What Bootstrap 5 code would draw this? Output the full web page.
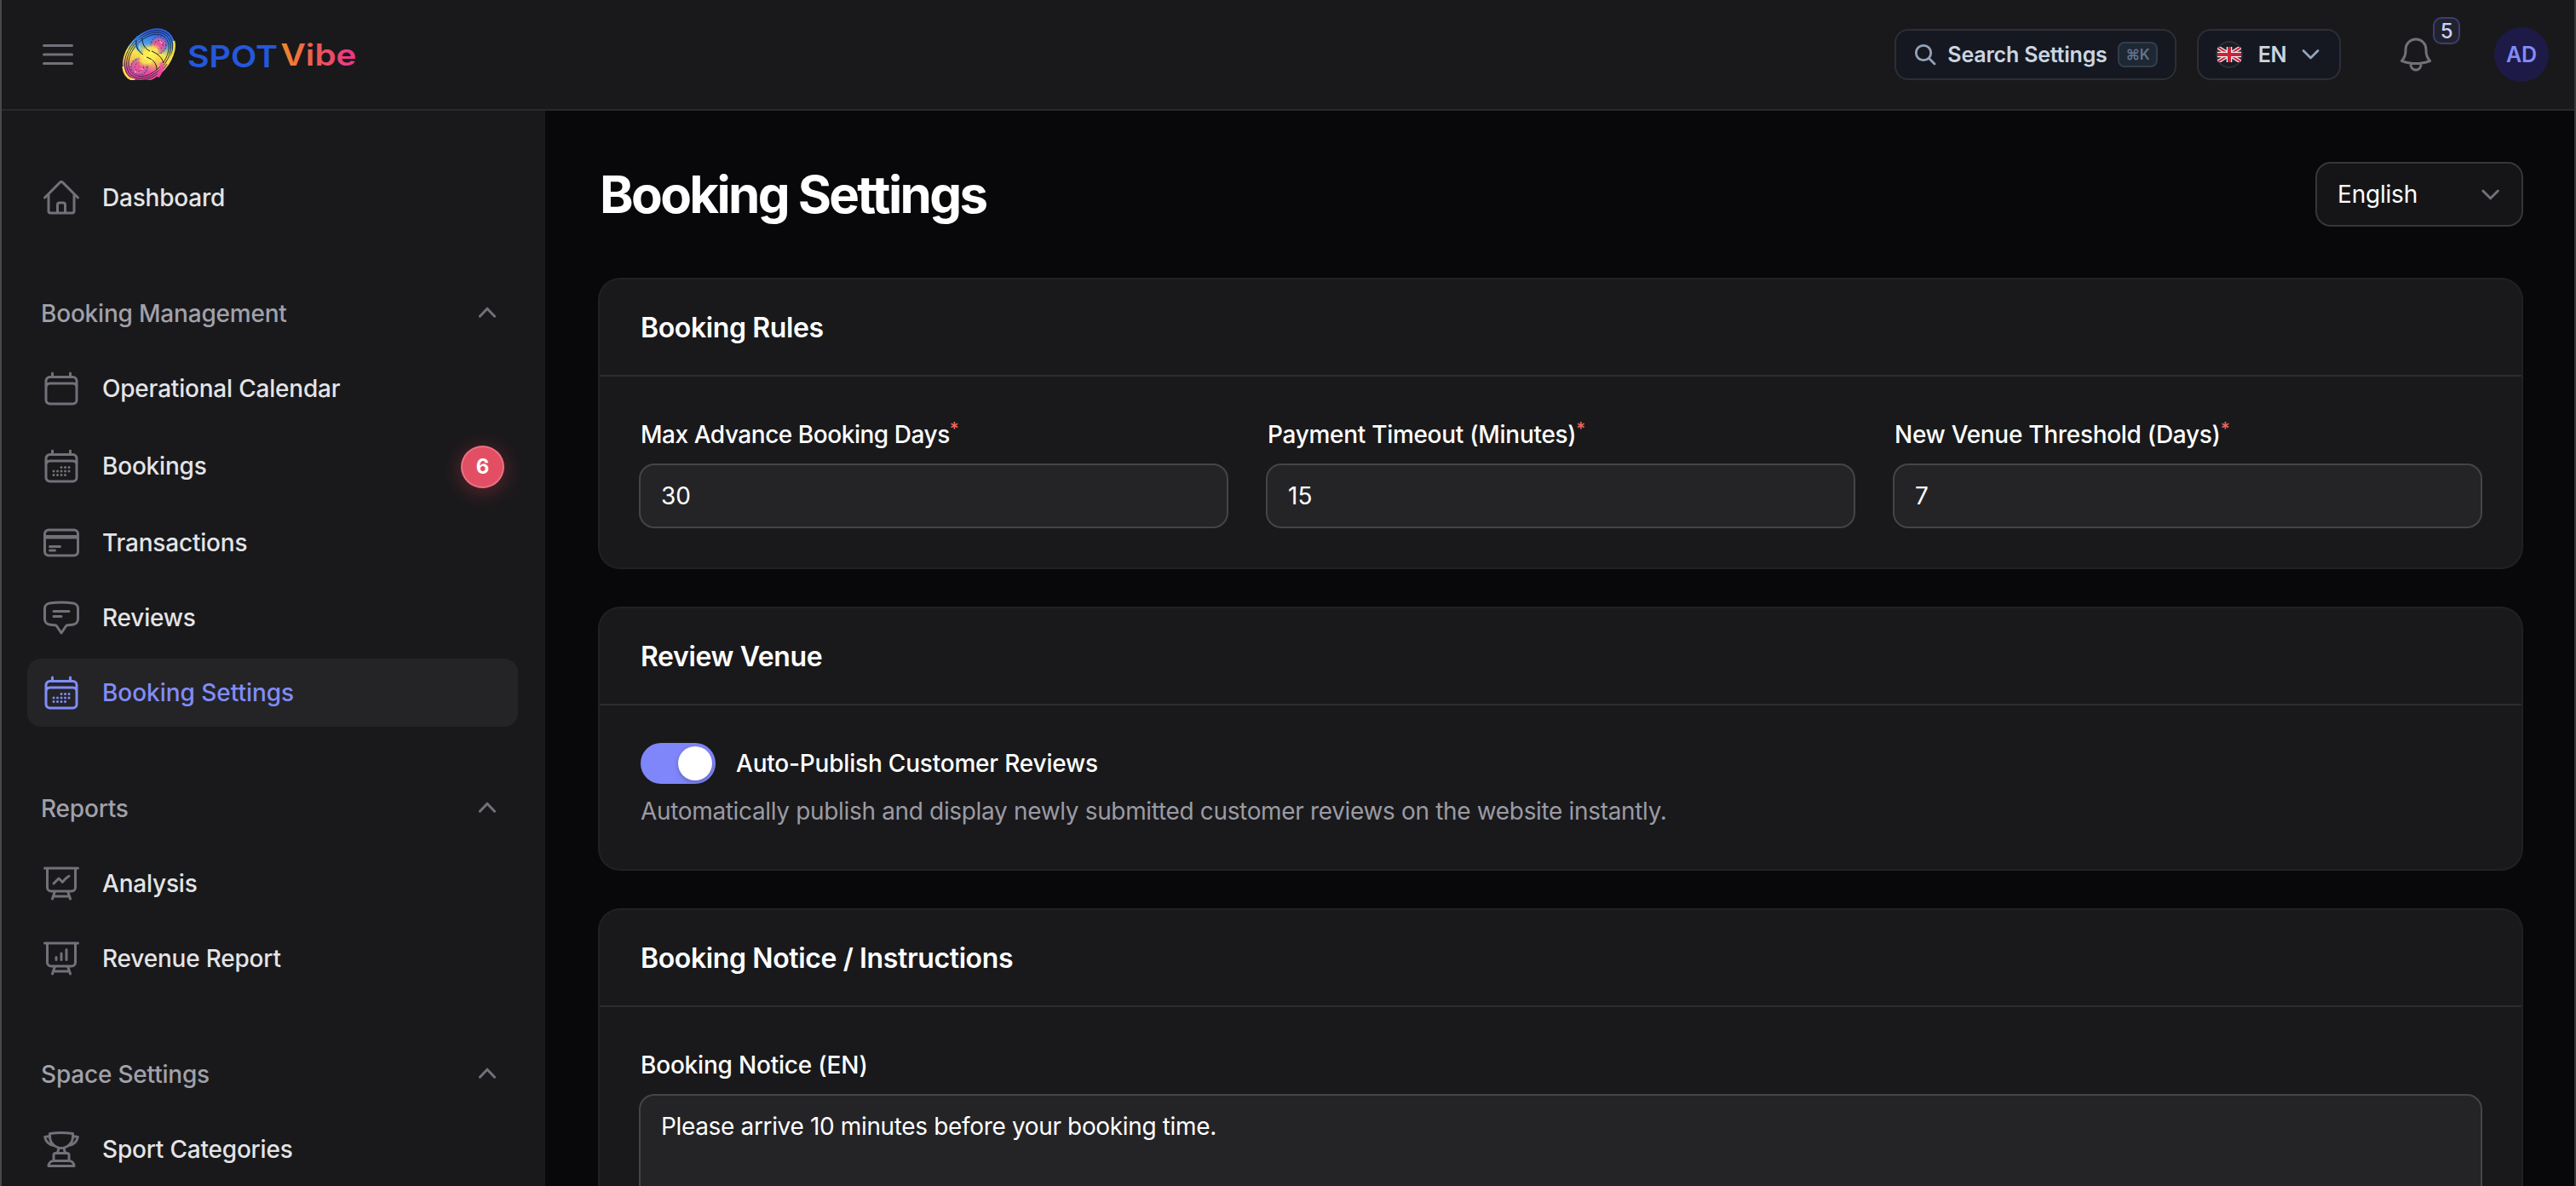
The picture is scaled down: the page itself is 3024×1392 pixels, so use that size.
<!DOCTYPE html>
<html lang="en" data-bs-theme="dark">
<head>
    <meta charset="UTF-8">
    <meta name="viewport" content="width=device-width, initial-scale=1">
    <title>Booking Settings</title>
    <link href="https://cdn.jsdelivr.net/npm/bootstrap@5.3.0/dist/css/bootstrap.min.css" rel="stylesheet">
    <style>
        body {
            font-family: Inter, "Liberation Sans", sans-serif;
            font-size: 28px;
            line-height: 48px;
            font-weight: 500;
            letter-spacing: -.2px;
            color: #fff;
            background: #08080a;
            height: 100vh;
            overflow: hidden;
            border-left: 2px solid #48484a;
            border-right: 2px solid #38383a;
        }
        svg { display: block; flex-shrink: 0; }
        .ico {
            width: 48px;
            height: 48px;
            fill: none;
            stroke: #71717a;
            stroke-width: 1.5;
            stroke-linecap: round;
            stroke-linejoin: round;
        }

        /* top bar */
        .topbar {
            height: 130px;
            background: #19191b;
            border-bottom: 2px solid #29292b;
            padding: 0 30px 0 42px;
        }
        .brand-logo { margin-left: 50px; letter-spacing: 0; }
        .pill-btn {
            height: 60px;
            background: #151820;
            border: 2px solid #2d2e36;
            border-radius: 16px;
            color: #cbd5e1;
            font-size: 25px;
            font-weight: 600;
            letter-spacing: -.2px;
            line-height: 1;
        }
        .search-btn { width: 331px; padding: 0 20px 0 20px; margin-right: 24px; }
        .lang-btn { width: 169px; padding: 0 22px 0 20px; margin-right: 64px; }
        .key-hint {
            width: 47px;
            height: 30px;
            border: 2px solid #333d4b;
            border-radius: 8px;
            background: #1e2734;
            color: #64748b;
            font-family: Inter, "DejaVu Sans", sans-serif;
            font-size: 17px;
            line-height: 1;
        }
        .bell-count {
            position: absolute;
            left: 44px;
            top: -20px;
            width: 32px;
            height: 32px;
            border: 2px solid #3e3c76;
            border-radius: 10px;
            background: #22222d;
            color: #c7d2fe;
            font-size: 24px;
            line-height: 30px;
            text-align: center;
        }
        .avatar {
            width: 64px;
            height: 64px;
            margin-left: 68px;
            border-radius: 50%;
            background: #1e1a47;
            color: #818cf8;
            font-size: 25px;
            font-weight: 600;
        }

        /* sidebar */
        .shell { height: calc(100vh - 130px); overflow: hidden; }
        .sidebar {
            width: 638px;
            flex-shrink: 0;
            background: #19191b;
            padding: 62px 32px 0 30px;
        }
        .side-group { margin-bottom: 56px; }
        .side-group:last-child { margin-bottom: 0; }
        .side-item, .side-head {
            padding: 16px;
            border-radius: 16px;
            color: #e4e4e7;
            text-decoration: none;
        }
        .side-item { gap: 24px; }
        .side-head { color: #a1a1aa; }
        .side-item.current { background: #242427; color: #818cf8; letter-spacing: -.04px; }
        .side-item.current .ico { stroke: #818cf8; }
        .caret { width: 40px; height: 40px; fill: none; stroke: #71717a; stroke-width: 1.5; stroke-linecap: round; stroke-linejoin: round; }
        .count-dot {
            width: 51px;
            height: 50px;
            margin: 3px 0 0;
            border: 2px solid #ec7182;
            border-radius: 50%;
            background: #e24e63;
            box-shadow: 0 4px 24px rgba(226, 60, 85, .38);
            color: #fff;
            font-size: 24px;
            font-weight: 700;
            line-height: 46px;
            text-align: center;
        }

        /* content */
        .content { padding: 62px 62px 0 64px; min-width: 0; overflow: hidden; }
        .page-title { font-size: 60px; line-height: 71px; padding-top: 1px; font-weight: 700; letter-spacing: -2.65px; }
        .ring-box {
            border-radius: 16px;
            background: #242427;
            box-shadow: 0 0 0 2px #454547;
            border: 0;
            color: #fff;
            font-weight: 400;
        }
        .locale-select { width: 240px; height: 72px; background: #151517; box-shadow: 0 0 0 2px #363638; padding: 0 16px 0 24px; }
        .panel {
            border: 0;
            border-radius: 24px;
            background: #19191b;
            box-shadow: 0 0 0 2px #212123;
            margin-bottom: 48px;
        }
        .panel-head { padding: 33px 48px 31px; font-size: 32px; line-height: 48px; font-weight: 600; letter-spacing: -.38px; margin: 0; }
        .panel-body { padding: 48px; border-top: 2px solid #2d2d30; }
        .fields { display: grid; grid-template-columns: repeat(3, 1fr); gap: 48px; }
        .field-label { display: block; line-height: 40px; height: 40px; margin-bottom: 16px; }
        .fields .field-label { letter-spacing: -.3px; }
        .fields > :first-child .field-label { letter-spacing: -.46px; }
        .field-label sup { color: #f0655f; font-size: 21px; line-height: 0; top: -.42em; }
        input.ring-box { display: block; width: 100%; height: 72px; padding: 12px 24px; }
        textarea.ring-box { display: block; width: 100%; height: 300px; padding: 12px 24px; resize: none; letter-spacing: -.35px; }
        .toggle { width: 88px; height: 48px; padding: 4px; border-radius: 24px; background: #7f86fa; }
        .toggle span { width: 40px; height: 40px; border-radius: 50%; background: #fff; box-shadow: 0 2px 5px rgba(0, 0, 0, .25); }
        .toggle-row { height: 40px; gap: 24px; margin-bottom: 16px; }
        .hint { color: #9b9ba4; line-height: 40px; font-weight: 400; letter-spacing: -.34px; }
    </style>
</head>
<body>

<svg width="0" height="0" class="position-absolute">
    <defs>
        <symbol id="i-calendar" viewBox="0 0 24 24">
            <path d="M6.75 3v2.25M17.25 3v2.25M3 18.75V7.5a2.25 2.25 0 0 1 2.25-2.25h13.5A2.25 2.25 0 0 1 21 7.5v11.25m-18 0A2.25 2.25 0 0 0 5.25 21h13.5A2.25 2.25 0 0 0 21 18.75m-18 0v-7.5A2.25 2.25 0 0 1 5.25 9h13.5A2.25 2.25 0 0 1 21 11.25v7.5"/>
        </symbol>
        <symbol id="i-calendar-days" viewBox="0 0 24 24">
            <path d="M6.75 3v2.25M17.25 3v2.25M3 18.75V7.5a2.25 2.25 0 0 1 2.25-2.25h13.5A2.25 2.25 0 0 1 21 7.5v11.25m-18 0A2.25 2.25 0 0 0 5.25 21h13.5A2.25 2.25 0 0 0 21 18.75m-18 0v-7.5A2.25 2.25 0 0 1 5.25 9h13.5A2.25 2.25 0 0 1 21 11.25v7.5m-9-6h.008v.008H12v-.008ZM12 15h.008v.008H12V15Zm0 2.250h.008v.008H12v-.008ZM9.750 15h.008v.008H9.750V15Zm0 2.250h.008v.008H9.750v-.008ZM7.500 15h.008v.008H7.500V15Zm0 2.250h.008v.008H7.500v-.008Zm6.750-4.500h.008v.008h-.008v-.008Zm0 2.250h.008v.008h-.008V15Zm0 2.250h.008v.008h-.008v-.008Zm2.250-4.500h.008v.008H16.500v-.008Zm0 2.250h.008v.008H16.500V15Z"/>
        </symbol>
        <symbol id="i-up" viewBox="0 0 20 20"><path d="m5.700 11.600 4.300-4.500 4.300 4.500"/></symbol>
        <symbol id="i-board" viewBox="0 0 24 24">
            <path d="M3.750 3v11.250A2.250 2.250 0 0 0 6 16.500h12a2.250 2.250 0 0 0 2.250-2.250V3M2.250 3h19.500M8.250 16.500l-1 3m8.500-3 1 3m0 0 .5 1.500m-.5-1.500h-9.500m0 0-.5 1.500"/>
        </symbol>
        <linearGradient id="vibe" x1="0" y1="0" x2="1" y2="0">
            <stop offset="0" stop-color="#f08a2c"/>
            <stop offset=".45" stop-color="#ee5a50"/>
            <stop offset="1" stop-color="#ec3294"/>
        </linearGradient>
        <linearGradient id="ball" gradientUnits="userSpaceOnUse" x1="158" y1="42" x2="190" y2="90">
            <stop offset="0" stop-color="#2a5fe8"/>
            <stop offset=".25" stop-color="#4a9fe6"/>
            <stop offset=".45" stop-color="#f7e64a"/>
            <stop offset=".62" stop-color="#f6c552"/>
            <stop offset=".82" stop-color="#ee4fa0"/>
            <stop offset="1" stop-color="#ea3c9e"/>
        </linearGradient>
        <radialGradient id="lobe">
            <stop offset="0" stop-color="#ee4f9c"/>
            <stop offset=".6" stop-color="#e85a98" stop-opacity=".9"/>
            <stop offset="1" stop-color="#7a5ac8" stop-opacity=".5"/>
        </radialGradient>
        <radialGradient id="core">
            <stop offset="0" stop-color="#fdf253"/>
            <stop offset=".65" stop-color="#fbe84e" stop-opacity=".9"/>
            <stop offset="1" stop-color="#f7c84e" stop-opacity="0"/>
        </radialGradient>
    </defs>
</svg>

<header class="topbar d-flex align-items-center">
    <svg class="ico" viewBox="0 0 24 24"><path d="M3.750 6.750h16.500M3.750 12h16.500m-16.500 5.250h16.500"/></svg>

    <svg class="brand-logo" width="290" height="64" viewBox="142 32 290 64">
        <svg x="142" y="32" width="66" height="62" viewBox="142 32 66 62">
            <ellipse cx="174.500" cy="65" rx="25.500" ry="36" fill="url(#ball)" transform="rotate(42 174.500 65)"/>
            <g fill="none" transform="rotate(42 174.500 65)">
                <ellipse cx="174.500" cy="65" rx="23.200" ry="33.500" stroke="#1d1c28" stroke-width=".8"/>
                <ellipse cx="174.500" cy="65" rx="21" ry="31" stroke="#1d1c28" stroke-width=".8"/>
                <ellipse cx="174.500" cy="65" rx="18.800" ry="28.500" stroke="#1d1c28" stroke-width=".8"/>
            </g>
            <!-- left and right rim highlights -->
            <path d="M144.500 78c1 9 6 15 14 16M204 48c2 8-1 18-8 27" fill="none" stroke="#f3e04e" stroke-width="2.500"/>
            <ellipse cx="186" cy="53" rx="10" ry="11" fill="url(#lobe)" transform="rotate(42 186 53)"/>
            <ellipse cx="163.500" cy="78.500" rx="10.500" ry="11.500" fill="url(#lobe)" transform="rotate(42 163.500 78.500)"/>
            <g fill="none" stroke="#2a2333" stroke-width=".8" stroke-dasharray="1.600 2">
                <ellipse cx="186" cy="53" rx="9" ry="10"/>
                <ellipse cx="186.500" cy="52.500" rx="5" ry="5"/>
                <ellipse cx="163.500" cy="78.500" rx="9.500" ry="9.500"/>
                <ellipse cx="163.500" cy="78.500" rx="5" ry="5"/>
            </g>
            <ellipse cx="175" cy="65" rx="17" ry="11.500" fill="url(#core)" transform="rotate(-45 175 65)"/>
            <path d="M162 43c-3 9-1 14 5 19M189 73c2 6 1 11-4 17" fill="none" stroke="url(#ball)" stroke-width="4"/>
            <path d="M160 47c-1 8 2 13 8 17M178 60c7 3 12 7 14 14M167 45c0 7 3 12 9 15M172 67c8 3 12 7 12 15" fill="none" stroke="#1d1b22" stroke-width="1"/>
            <path d="M163 54l2 5M169 68h3M176 73l3-4M182 57l3 2M165 80l3 2M188 48l2 3M175 62l4 1M158 84l2 1" stroke="#fff" stroke-width=".9" stroke-opacity=".75"/>
        </svg>
        <text x="220" y="78.500" font-family="Inter" font-size="36" font-weight="600" fill="#2458dc" textLength="106" lengthAdjust="spacingAndGlyphs">SPOT</text>
        <text x="329.500" y="76.500" font-family="Inter" font-size="35" font-weight="600" fill="url(#vibe)" textLength="89" lengthAdjust="spacingAndGlyphs">Vibe</text>
    </svg>

    <div class="d-flex align-items-center ms-auto">
        <button type="button" class="pill-btn search-btn d-flex align-items-center">
            <svg width="28" height="28" viewBox="0 0 28 28" fill="none" stroke="#94a3b8" stroke-width="2.800" stroke-linecap="round"><circle cx="12" cy="12" r="8.700"/><path d="m18.500 18.500 6.500 6.500"/></svg>
            <span class="ms-auto me-auto">Search Settings</span>
            <kbd class="key-hint d-flex align-items-center justify-content-center p-0">⌘K</kbd>
        </button>
        <button type="button" class="pill-btn lang-btn d-flex align-items-center justify-content-between">
            <svg width="32" height="32" viewBox="0 0 32 32">
                <circle cx="16" cy="16" r="15" fill="#1a1c22" stroke="#2f3036" stroke-width="2"/>
                <svg x="2" y="7" width="28" height="18" viewBox="0 0 28 18">
                    <rect width="28" height="18" fill="#1e2233"/>
                    <path d="M0 0l28 18M28 0L0 18" stroke="#f1eef0" stroke-width="4.500"/>
                    <path d="M0 0l28 18M28 0L0 18" stroke="#c9243a" stroke-width="2"/>
                    <path d="M14 0v18M0 9h28" stroke="#f1eef0" stroke-width="6.500"/>
                    <path d="M14 0v18M0 9h28" stroke="#c9243a" stroke-width="4"/>
                </svg>
            </svg>
            <span>EN</span>
            <svg width="22" height="14" viewBox="0 0 22 14" fill="none" stroke="#94a3b8" stroke-width="2.800" stroke-linecap="round" stroke-linejoin="round"><path d="m2 2.500 8.500 8.500L19 2.500"/></svg>
        </button>
        <div class="position-relative">
            <svg class="ico" viewBox="0 0 24 24"><path d="M14.857 17.082a23.848 23.848 0 0 0 5.454-1.310A8.967 8.967 0 0 1 18 9.750V9A6 6 0 0 0 6 9v.750a8.967 8.967 0 0 1-2.312 6.022c1.733.640 3.560 1.085 5.455 1.310m5.714 0a24.255 24.255 0 0 1-5.714 0m5.714 0a3 3 0 1 1-5.714 0"/></svg>
            <span class="bell-count">5</span>
        </div>
        <div class="avatar d-flex align-items-center justify-content-center">AD</div>
    </div>
</header>

<div class="shell d-flex">
    <nav class="sidebar">
        <div class="side-group">
            <a href="#" class="side-item d-flex align-items-center">
                <svg class="ico" viewBox="0 0 24 24"><path d="m2.250 12 8.954-8.955a1.126 1.126 0 0 1 1.591 0L21.750 12M4.500 9.750v10.125c0 .621.504 1.125 1.125 1.125H9.750v-4.875c0-.621.504-1.125 1.125-1.125h2.250c.621 0 1.125.504 1.125 1.125V21h4.125c.621 0 1.125-.504 1.125-1.125V9.750M8.250 21h8.250"/></svg>
                <span>Dashboard</span>
            </a>
        </div>

        <div class="side-group d-flex flex-column gap-2">
            <div class="side-head d-flex align-items-center justify-content-between">
                <span>Booking Management</span>
                <svg class="caret"><use href="#i-up"/></svg>
            </div>
            <a href="#" class="side-item d-flex align-items-center">
                <svg class="ico"><use href="#i-calendar"/></svg>
                <span>Operational Calendar</span>
            </a>
            <a href="#" class="side-item d-flex align-items-center">
                <svg class="ico"><use href="#i-calendar-days"/></svg>
                <span>Bookings</span>
                <span class="count-dot ms-auto">6</span>
            </a>
            <a href="#" class="side-item d-flex align-items-center">
                <svg class="ico" viewBox="0 0 24 24"><path d="M2.250 8.250h19.500M2.250 9h19.500m-16.500 5.250h6m-6 2.250h3m-3.750 3h15a2.250 2.250 0 0 0 2.250-2.250V6.750A2.250 2.250 0 0 0 19.500 4.500h-15a2.250 2.250 0 0 0-2.250 2.250v10.500A2.250 2.250 0 0 0 4.500 19.500Z"/></svg>
                <span>Transactions</span>
            </a>
            <a href="#" class="side-item d-flex align-items-center">
                <svg class="ico" viewBox="0 0 24 24"><path d="M7.500 8.250h9m-9 3H12m-9.750 1.510c0 1.600 1.123 2.994 2.707 3.227 1.129.166 2.270.293 3.423.379.350.026.670.210.865.501L12 21l2.755-4.133a1.140 1.140 0 0 1 .865-.501 48.172 48.172 0 0 0 3.423-.379c1.584-.233 2.707-1.626 2.707-3.228V6.741c0-1.602-1.123-2.995-2.707-3.228A48.394 48.394 0 0 0 12 3c-2.392 0-4.744.175-7.043.513C3.373 3.746 2.250 5.140 2.250 6.741v6.018Z"/></svg>
                <span>Reviews</span>
            </a>
            <a href="#" class="side-item current d-flex align-items-center">
                <svg class="ico"><use href="#i-calendar-days"/></svg>
                <span>Booking Settings</span>
            </a>
        </div>

        <div class="side-group d-flex flex-column gap-2">
            <div class="side-head d-flex align-items-center justify-content-between">
                <span>Reports</span>
                <svg class="caret"><use href="#i-up"/></svg>
            </div>
            <a href="#" class="side-item d-flex align-items-center">
                <svg class="ico" viewBox="0 0 24 24"><use href="#i-board" width="24" height="24"/><path d="m7.500 12 3-3 2.148 2.148A12.061 12.061 0 0 1 16.500 7.605"/></svg>
                <span>Analysis</span>
            </a>
            <a href="#" class="side-item d-flex align-items-center">
                <svg class="ico" viewBox="0 0 24 24"><use href="#i-board" width="24" height="24"/><path d="M9 11.250v1.500M12 9v3.750m3-6v6"/></svg>
                <span>Revenue Report</span>
            </a>
        </div>

        <div class="side-group d-flex flex-column gap-2">
            <div class="side-head d-flex align-items-center justify-content-between">
                <span>Space Settings</span>
                <svg class="caret"><use href="#i-up"/></svg>
            </div>
            <a href="#" class="side-item d-flex align-items-center">
                <svg class="ico" viewBox="0 0 24 24"><path d="M16.500 18.750h-9m9 0a3 3 0 0 1 3 3h-15a3 3 0 0 1 3-3m9 0v-3.375c0-.621-.503-1.125-1.125-1.125h-.871M7.500 18.750v-3.375c0-.621.504-1.125 1.125-1.125h.872m5.007 0H9.497m5.007 0a7.454 7.454 0 0 1-.982-3.172M9.497 14.250a7.454 7.454 0 0 0 .981-3.172M5.250 4.236c-.982.143-1.954.317-2.916.520A6.003 6.003 0 0 0 7.730 9.728M5.250 4.236V4.500c0 2.108.966 3.990 2.480 5.228M5.250 4.236V2.721C7.456 2.410 9.710 2.250 12 2.250c2.291 0 4.545.160 6.750.470v1.516M7.730 9.728a6.726 6.726 0 0 0 2.748 1.350m8.272-6.842V4.500c0 2.108-.966 3.990-2.480 5.228m2.480-5.492a46.320 46.320 0 0 1 2.916.520 6.003 6.003 0 0 1-5.395 4.972m0 0a6.726 6.726 0 0 1-2.749 1.350m0 0a6.772 6.772 0 0 1-3.044 0"/></svg>
                <span>Sport Categories</span>
            </a>
        </div>
    </nav>

    <main class="content flex-grow-1">
        <div class="d-flex align-items-center justify-content-between mb-5 pb-3">
            <h1 class="page-title m-0">Booking Settings</h1>
            <div class="ring-box locale-select d-flex align-items-center justify-content-between">
                <span>English</span>
                <svg class="caret" viewBox="0 0 20 20"><path d="m5.400 8 4.400 4.400L14.200 8"/></svg>
            </div>
        </div>

        <section class="panel">
            <h2 class="panel-head">Booking Rules</h2>
            <div class="panel-body fields">
                <div>
                    <label class="field-label" for="maxDays">Max Advance Booking Days<sup>*</sup></label>
                    <input type="text" class="ring-box" id="maxDays" value="30">
                </div>
                <div>
                    <label class="field-label" for="timeout">Payment Timeout (Minutes)<sup>*</sup></label>
                    <input type="text" class="ring-box" id="timeout" value="15">
                </div>
                <div>
                    <label class="field-label" for="threshold">New Venue Threshold (Days)<sup>*</sup></label>
                    <input type="text" class="ring-box" id="threshold" value="7">
                </div>
            </div>
        </section>

        <section class="panel">
            <h2 class="panel-head">Review Venue</h2>
            <div class="panel-body">
                <div class="toggle-row d-flex align-items-center">
                    <div class="toggle d-flex justify-content-end" role="switch" aria-checked="true"><span></span></div>
                    <span>Auto-Publish Customer Reviews</span>
                </div>
                <div class="hint">Automatically publish and display newly submitted customer reviews on the website instantly.</div>
            </div>
        </section>

        <section class="panel">
            <h2 class="panel-head">Booking Notice / Instructions</h2>
            <div class="panel-body">
                <label class="field-label" for="notice">Booking Notice (EN)</label>
                <textarea class="ring-box" id="notice">Please arrive 10 minutes before your booking time.</textarea>
            </div>
        </section>
    </main>
</div>

<script src="https://cdn.jsdelivr.net/npm/bootstrap@5.3.0/dist/js/bootstrap.bundle.min.js"></script>
</body>
</html>
